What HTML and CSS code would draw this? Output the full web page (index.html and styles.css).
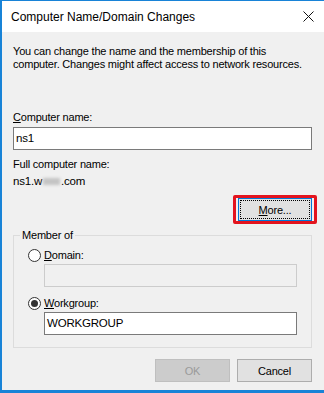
FILE: index.html
```html
<!DOCTYPE html>
<html lang="en">
  <head>
    <meta charset="UTF-8" />
    <meta name="viewport" content="width=device-width, initial-scale=1.0" />
    <title>Computer Name/Domain Changes</title>
    <link rel="stylesheet" href="styles.css">
  </head>
  <body>
    <div class="window">
      <div class="titlebar">
        <span class="title">Computer Name/Domain Changes</span>
        <svg class="close" width="11" height="11" viewBox="0 0 11 11">
          <path d="M0.5 0.5 L10.5 10.5 M10.5 0.5 L0.5 10.5" stroke="#111" stroke-width="1" fill="none" />
        </svg>
      </div>
      <div class="content">
        <p class="intro">You can change the name and the membership of this<br />computer. Changes might affect access to network resources.</p>
        <p class="label name-label"><u>C</u>omputer name:</p>
        <div class="field">ns1</div>
        <p class="label full-label">Full computer name:</p>
        <p class="label fqdn">ns1.w<span class="blur"></span>.com</p>
        <div class="more-row">
          <span class="highlight">
            <button class="btn focused"><span class="focus-ring"><u>M</u>ore...</span></button>
          </span>
        </div>
        <fieldset class="group">
          <legend>Member of</legend>
          <div class="radio-row"><span class="radio"></span><span><u>D</u>omain:</span></div>
          <div class="field disabled"></div>
          <div class="radio-row workgroup"><span class="radio checked"></span><span><u>W</u>orkgroup:</span></div>
          <div class="field">WORKGROUP</div>
        </fieldset>
        <div class="actions">
          <button class="btn disabled">OK</button>
          <button class="btn">Cancel</button>
        </div>
      </div>
    </div>
  </body>
</html>
```

FILE: styles.css
```css
html,
body {
  width: 100%;
  height: 100%;
  padding: 0;
  margin: 0;
  background-color: #f0f0f0;
}

.window {
  height: 393px;
  box-sizing: border-box;
  border-top: 1px solid #1883d7;
  border-left: 2px solid #1883d7;
  border-bottom: 3px solid #1883d7;
  display: flex;
  flex-direction: column;
  font-family: "Liberation Sans", Arial, sans-serif;
  font-size: 11px;
  letter-spacing: -0.2px;
  color: #000;
}

.titlebar {
  height: 31px;
  flex: none;
  background: #fff;
  display: flex;
  align-items: center;
  justify-content: space-between;
  padding: 0 10px 0 9px;
}

.title {
  font-size: 12px;
  letter-spacing: 0;
}

.close {
  display: block;
}

.content {
  flex: 1;
  background: #f0f0f0;
  padding: 0 12px 0 11px;
  line-height: 13px;
}

p {
  margin: 0;
}

.intro {
  margin-top: 13px;
  white-space: nowrap;
}

.name-label {
  margin-top: 40px;
}

.field {
  height: 23px;
  box-sizing: border-box;
  margin-top: 3px;
  border: 1px solid #7a7a7a;
  background: #fff;
  padding: 0 2px;
  display: flex;
  align-items: center;
  font-size: 11.5px;
}

.field.disabled {
  border-color: #cccccc;
  background: #f0f0f0;
}

.full-label {
  margin-top: 8px;
}

.fqdn {
  margin-top: 4px;
  font-size: 11.5px;
}

.blur {
  display: inline-block;
  width: 17px;
  height: 7px;
  margin: 0 1px;
  background: #c4c4c4;
  filter: blur(1.5px);
}

.more-row {
  display: flex;
  justify-content: flex-end;
  margin-top: 7px;
  margin-right: -5px;
}

.highlight {
  display: flex;
  border: 3px solid #e3141e;
  border-radius: 2px;
  padding: 0 2px;
}

.btn {
  width: 75px;
  height: 23px;
  box-sizing: border-box;
  border: 1px solid #adadad;
  background: #e1e1e1;
  font-family: inherit;
  font-size: 11px;
  letter-spacing: -0.2px;
  color: #000;
  padding: 0;
}

.btn.focused {
  width: 74px;
  border: 1px solid #0078d7;
  padding: 1px;
  display: flex;
}

.focus-ring {
  flex: 1;
  display: flex;
  align-items: center;
  justify-content: center;
  border: 1px dotted #000;
}

.btn.disabled {
  background: #cccccc;
  border-color: #bfbfbf;
  color: #9a9a9a;
}

.group {
  margin: 5px 0 0 0;
  padding: 6px 14px 12px 14px;
  border: 1px solid #dcdcdc;
}

.group legend {
  padding: 0 2px;
  margin-left: -8px;
}

.radio-row {
  display: flex;
  align-items: center;
  gap: 3px;
  height: 15px;
}

.radio-row + .field {
  margin-left: 16px;
  margin-top: 1px;
}

.workgroup {
  margin-top: 9px;
}

.radio {
  width: 13px;
  height: 13px;
  box-sizing: border-box;
  border: 1px solid #333;
  border-radius: 50%;
  background: #fff;
  display: flex;
  align-items: center;
  justify-content: center;
}

.radio.checked::after {
  content: "";
  width: 7px;
  height: 7px;
  border-radius: 50%;
  background: #333;
}

.actions {
  display: flex;
  justify-content: flex-end;
  gap: 7px;
  margin-top: 11px;
}
```
